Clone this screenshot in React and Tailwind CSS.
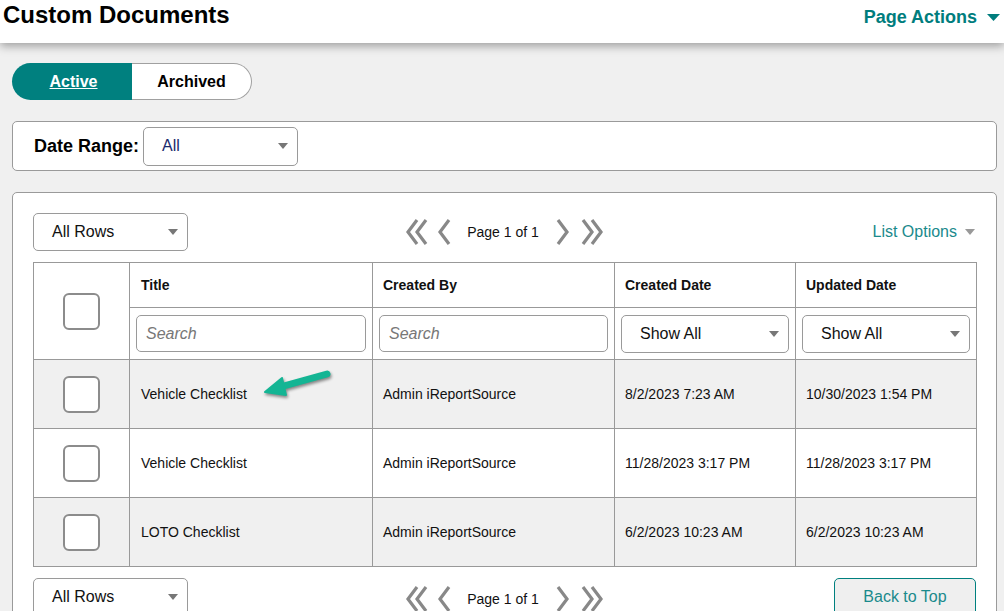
import React from "react";

const Caret = ({ className = "" }) => (
  <svg width="10" height="6" viewBox="0 0 10 6" className={className}>
    <path d="M0 0 L10 0 L5 6 Z" fill="currentColor" />
  </svg>
);

const Select = ({ text, className = "" }) => (
  <div
    className={`flex items-center justify-between rounded-[5px] border border-[#9a9a9a] bg-white pl-[18px] pr-[9px] text-[16px] text-[#111] ${className}`}
  >
    <span>{text}</span>
    <Caret className="text-[#777]" />
  </div>
);

const DoubleLeft = () => (
  <svg width="22" height="26" viewBox="0 0 22 26" fill="none" stroke="#888" strokeWidth="3.2">
    <path d="M11 1 L2 13 L11 25" />
    <path d="M20 1 L11 13 L20 25" />
  </svg>
);
const SingleLeft = () => (
  <svg width="14" height="26" viewBox="0 0 14 26" fill="none" stroke="#888" strokeWidth="3.2">
    <path d="M12 1 L3 13 L12 25" />
  </svg>
);
const SingleRight = () => (
  <svg width="14" height="26" viewBox="0 0 14 26" fill="none" stroke="#888" strokeWidth="3.2">
    <path d="M2 1 L11 13 L2 25" />
  </svg>
);
const DoubleRight = () => (
  <svg width="22" height="26" viewBox="0 0 22 26" fill="none" stroke="#888" strokeWidth="3.2">
    <path d="M2 1 L11 13 L2 25" />
    <path d="M11 1 L20 13 L11 25" />
  </svg>
);

const Pager = () => (
  <div className="flex items-center justify-center">
    <DoubleLeft />
    <span className="ml-[9px]"><SingleLeft /></span>
    <span className="mx-[16px] text-[14px] text-[#111]">
      Page 1 of 1
    </span>
    <span className="ml-[1px]"><SingleRight /></span>
    <span className="ml-[11px]"><DoubleRight /></span>
  </div>
);

const Checkbox = () => (
  <div className="mx-auto h-[37px] w-[37px] rounded-[6px] border-2 border-[#8c8c8c] bg-white" />
);

const rows = [
  { title: "Vehicle Checklist", by: "Admin iReportSource", created: "8/2/2023 7:23 AM", updated: "10/30/2023 1:54 PM", bg: "bg-[#f0f0f0]", arrow: true },
  { title: "Vehicle Checklist", by: "Admin iReportSource", created: "11/28/2023 3:17 PM", updated: "11/28/2023 3:17 PM", bg: "bg-white" },
  { title: "LOTO Checklist", by: "Admin iReportSource", created: "6/2/2023 10:23 AM", updated: "6/2/2023 10:23 AM", bg: "bg-[#f0f0f0]" },
];

export default function App() {
  return (
    <div
      className="h-[611px] w-[1004px] overflow-hidden bg-[#f0f0f0] text-[#111]"
      style={{ fontFamily: '"Liberation Sans", Arial, sans-serif' }}
    >
      {/* Header */}
      <div className="relative z-10 flex h-[43px] items-start justify-between bg-white pl-[3px] pr-[4px] shadow-[0_3px_9px_rgba(0,0,0,0.35)]">
        <h1 className="text-[24px] font-bold leading-[30px] text-black">Custom Documents</h1>
        <div className="mt-[4px] flex items-center text-[18px] font-bold text-[#007d7d]">
          <span>Page Actions</span>
          <svg width="13" height="7" viewBox="0 0 13 7" className="ml-[10px]">
            <path d="M0 0 L13 0 L6.5 7 Z" fill="#007d7d" />
          </svg>
        </div>
      </div>

      <div className="pl-[12px] pr-[7px]">
        {/* Tabs */}
        <div className="mt-[20px] flex h-[37px] w-[240px]">
          <div className="flex w-[120px] items-center justify-center rounded-l-full bg-[#00807f] pl-[3px] text-[16px] font-bold text-white underline">
            Active
          </div>
          <div className="flex w-[120px] items-center justify-center rounded-r-full border border-l-0 border-[#a0a0a0] bg-white text-[16px] font-bold text-black">
            Archived
          </div>
        </div>

        {/* Date range */}
        <div className="mt-[21px] flex h-[50px] items-center rounded-[5px] border border-[#9a9a9a] bg-white pl-[21px]">
          <span className="text-[18px] font-bold text-black">Date Range:</span>
          <Select text="All" className="ml-[4px] h-[39px] w-[155px] !text-[#1a2a6c]" />
        </div>

        {/* Main panel */}
        <div className="mt-[21px] rounded-[5px] border border-[#9a9a9a] bg-white px-[20px] pt-[20px]">
          <div className="grid grid-cols-3 items-center">
            <Select text="All Rows" className="h-[38px] w-[155px]" />
            <Pager />
            <div className="flex items-center justify-end pr-[1px] text-[16px] text-[#1a8a8c]">
              <span>List Options</span>
              <Caret className="ml-[8px] text-[#999]" />
            </div>
          </div>

          <table className="mt-[11px] w-[943px] table-fixed border-collapse text-[14px]">
            <colgroup>
              <col className="w-[96px]" />
              <col className="w-[243px]" />
              <col className="w-[242px]" />
              <col className="w-[181px]" />
              <col className="w-[181px]" />
            </colgroup>
            <thead>
              <tr className="h-[45px]">
                <th rowSpan={2} className="border border-[#999] align-middle">
                  <Checkbox />
                </th>
                <th className="border border-[#999] px-[11px] text-left font-bold">Title</th>
                <th className="border border-[#999] px-[10px] text-left font-bold">Created By</th>
                <th className="border border-[#999] px-[10px] text-left font-bold">Created Date</th>
                <th className="border border-[#999] px-[10px] text-left font-bold">Updated Date</th>
              </tr>
              <tr className="h-[52px]">
                <th className="border border-[#999] px-[6px] font-normal">
                  <div className="flex h-[37px] items-center rounded-[5px] border border-[#9a9a9a] px-[9px] text-[16px] italic text-[#777]">Search</div>
                </th>
                <th className="border border-[#999] px-[6px] font-normal">
                  <div className="flex h-[37px] items-center rounded-[5px] border border-[#9a9a9a] px-[9px] text-[16px] italic text-[#777]">Search</div>
                </th>
                <th className="border border-[#999] px-[6px] font-normal">
                  <Select text="Show All" className="h-[38px]" />
                </th>
                <th className="border border-[#999] px-[6px] font-normal">
                  <Select text="Show All" className="h-[38px]" />
                </th>
              </tr>
            </thead>
            <tbody>
              {rows.map((r, i) => (
                <tr key={i} className={`h-[69px] ${r.bg}`}>
                  <td className="border border-[#999]"><Checkbox /></td>
                  <td className="relative border border-[#999] px-[11px]">
                    {r.title}
                    {r.arrow && (
                      <svg
                        width="80"
                        height="36"
                        viewBox="0 0 80 36"
                        className="absolute left-[130px] top-[6px]"
                        style={{ filter: "drop-shadow(1px 2px 1.5px rgba(0,0,0,0.45))" }}
                      >
                        <path d="M67 8 L20 21" stroke="#14b594" strokeWidth="7" strokeLinecap="round" fill="none" />
                        <path d="M5 26 L22 12 L26 29 Z" fill="#14b594" stroke="#14b594" strokeWidth="2" strokeLinejoin="round" />
                      </svg>
                    )}
                  </td>
                  <td className="border border-[#999] px-[10px]">{r.by}</td>
                  <td className="border border-[#999] px-[10px]">{r.created}</td>
                  <td className="border border-[#999] px-[10px]">{r.updated}</td>
                </tr>
              ))}
            </tbody>
          </table>

          <div className="mt-[11px] grid grid-cols-3 items-start pb-[10px]">
            <Select text="All Rows" className="h-[38px] w-[155px]" />
            <div className="pt-[8px]"><Pager /></div>
            <div className="flex justify-end">
              <div className="flex h-[38px] w-[142px] items-center justify-center rounded-[5px] border border-[#00807f] bg-[#efefef] text-[16px] text-[#1a8a8c]">
                Back to Top
              </div>
            </div>
          </div>
        </div>
      </div>
    </div>
  );
}
